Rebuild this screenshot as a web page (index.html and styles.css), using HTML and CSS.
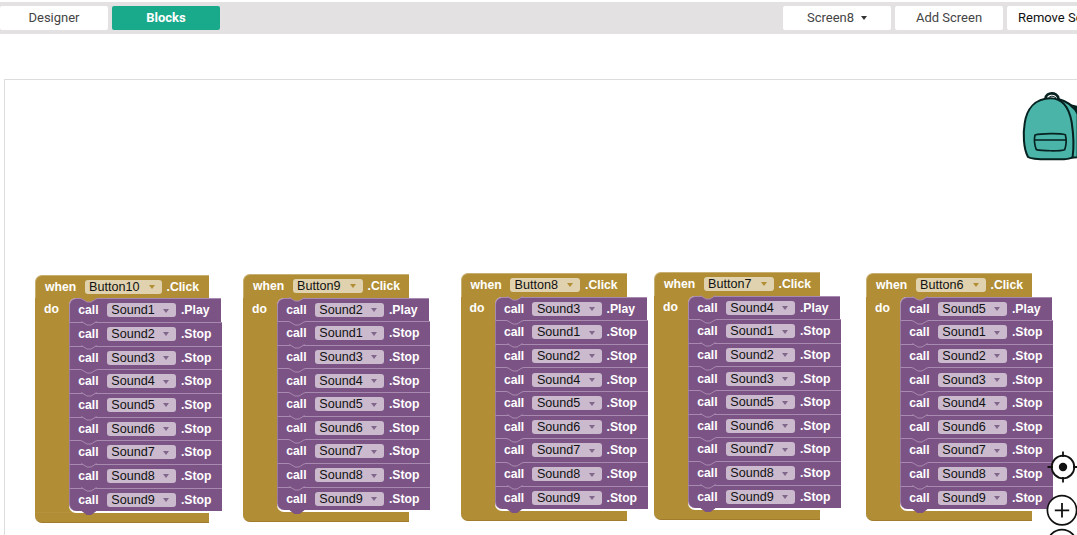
FILE: index.html
```html
<!DOCTYPE html>
<html lang="en">
<head>
<meta charset="utf-8">
<title>Blocks editor</title>
<link rel="stylesheet" href="styles.css">
</head>
<body>
<header class="toolbar">
  <nav class="group"><button class="tab">Designer</button><button class="tab active">Blocks</button></nav>
  <div class="group"><button class="tab menu">Screen8</button><button class="tab">Add Screen</button><button class="tab wide">Remove Screen</button></div>
</header>
<main class="workspace">
  <section class="event button10">
    <h2><b>when</b><i>Button10</i><b>.Click</b></h2>
    <div class="body"><b class="do">do</b>
      <ul>
        <li><b>call</b><i>Sound1</i><b>.Play</b></li>
        <li><b>call</b><i>Sound2</i><b>.Stop</b></li>
        <li><b>call</b><i>Sound3</i><b>.Stop</b></li>
        <li><b>call</b><i>Sound4</i><b>.Stop</b></li>
        <li><b>call</b><i>Sound5</i><b>.Stop</b></li>
        <li><b>call</b><i>Sound6</i><b>.Stop</b></li>
        <li><b>call</b><i>Sound7</i><b>.Stop</b></li>
        <li><b>call</b><i>Sound8</i><b>.Stop</b></li>
        <li><b>call</b><i>Sound9</i><b>.Stop</b></li>
      </ul>
    </div>
    <div class="foot"></div>
  </section>
  <section class="event button9">
    <h2><b>when</b><i>Button9</i><b>.Click</b></h2>
    <div class="body"><b class="do">do</b>
      <ul>
        <li><b>call</b><i>Sound2</i><b>.Play</b></li>
        <li><b>call</b><i>Sound1</i><b>.Stop</b></li>
        <li><b>call</b><i>Sound3</i><b>.Stop</b></li>
        <li><b>call</b><i>Sound4</i><b>.Stop</b></li>
        <li><b>call</b><i>Sound5</i><b>.Stop</b></li>
        <li><b>call</b><i>Sound6</i><b>.Stop</b></li>
        <li><b>call</b><i>Sound7</i><b>.Stop</b></li>
        <li><b>call</b><i>Sound8</i><b>.Stop</b></li>
        <li><b>call</b><i>Sound9</i><b>.Stop</b></li>
      </ul>
    </div>
    <div class="foot"></div>
  </section>
  <section class="event button8">
    <h2><b>when</b><i>Button8</i><b>.Click</b></h2>
    <div class="body"><b class="do">do</b>
      <ul>
        <li><b>call</b><i>Sound3</i><b>.Play</b></li>
        <li><b>call</b><i>Sound1</i><b>.Stop</b></li>
        <li><b>call</b><i>Sound2</i><b>.Stop</b></li>
        <li><b>call</b><i>Sound4</i><b>.Stop</b></li>
        <li><b>call</b><i>Sound5</i><b>.Stop</b></li>
        <li><b>call</b><i>Sound6</i><b>.Stop</b></li>
        <li><b>call</b><i>Sound7</i><b>.Stop</b></li>
        <li><b>call</b><i>Sound8</i><b>.Stop</b></li>
        <li><b>call</b><i>Sound9</i><b>.Stop</b></li>
      </ul>
    </div>
    <div class="foot"></div>
  </section>
  <section class="event button7">
    <h2><b>when</b><i>Button7</i><b>.Click</b></h2>
    <div class="body"><b class="do">do</b>
      <ul>
        <li><b>call</b><i>Sound4</i><b>.Play</b></li>
        <li><b>call</b><i>Sound1</i><b>.Stop</b></li>
        <li><b>call</b><i>Sound2</i><b>.Stop</b></li>
        <li><b>call</b><i>Sound3</i><b>.Stop</b></li>
        <li><b>call</b><i>Sound5</i><b>.Stop</b></li>
        <li><b>call</b><i>Sound6</i><b>.Stop</b></li>
        <li><b>call</b><i>Sound7</i><b>.Stop</b></li>
        <li><b>call</b><i>Sound8</i><b>.Stop</b></li>
        <li><b>call</b><i>Sound9</i><b>.Stop</b></li>
      </ul>
    </div>
    <div class="foot"></div>
  </section>
  <section class="event button6">
    <h2><b>when</b><i>Button6</i><b>.Click</b></h2>
    <div class="body"><b class="do">do</b>
      <ul>
        <li><b>call</b><i>Sound5</i><b>.Play</b></li>
        <li><b>call</b><i>Sound1</i><b>.Stop</b></li>
        <li><b>call</b><i>Sound2</i><b>.Stop</b></li>
        <li><b>call</b><i>Sound3</i><b>.Stop</b></li>
        <li><b>call</b><i>Sound4</i><b>.Stop</b></li>
        <li><b>call</b><i>Sound6</i><b>.Stop</b></li>
        <li><b>call</b><i>Sound7</i><b>.Stop</b></li>
        <li><b>call</b><i>Sound8</i><b>.Stop</b></li>
        <li><b>call</b><i>Sound9</i><b>.Stop</b></li>
      </ul>
    </div>
    <div class="foot"></div>
  </section>
  <svg class="backpack" viewBox="0 0 231 270" fill="#4ab4a9" stroke="#06211f" stroke-width="6" stroke-linejoin="round" stroke-linecap="round">
    <path d="M137 55C138 35 172 35 175 55" fill="none" stroke-width="8"/>
    <path d="M146 53Q155 43 167 53" fill="#fff" stroke-width="3"/>
    <path d="M175 57C205 65 222 78 233 102V232L214 233Z"/>
    <path d="M212 76L234 81V96Z" fill="#06211f"/>
    <path d="M84 231C70 205 69 160 74 130C80 88 104 56 152 55C190 55 207 84 215 126C220 160 222 200 218 229C216 240 175 238 145 238C118 238 92 237 84 231Z"/>
    <path d="M105 165C122 160 181 159 196 164C200 178 198 197 194 209C181 214 126 213 109 209C103 194 102 178 105 165Z" stroke-width="5"/>
    <path d="M104 180H198" stroke-width="5"/>
  </svg>
  <svg class="controls" viewBox="0 0 37 90" fill="#fff" stroke="#111" stroke-width="1.8">
    <circle cx="23" cy="22" r="11.3"/><circle cx="23" cy="22" r="4.2" fill="#111" stroke="none"/>
    <path d="M23 6.5V12M23 32V37.5M7.5 22H13M33 22H38.5"/>
    <circle cx="22" cy="65.3" r="14.6" stroke-width="1.7"/><path d="M14.8 65.3H29.2M22 58V72.6"/>
    <circle cx="22" cy="99.3" r="14.6"/>
  </svg>
</main>
</body>
</html>
```
FILE: styles.css
```css
* { box-sizing: border-box; }
body {
  margin: 0;
  height: 535px;
  overflow: hidden;
  background: #fff;
  display: flex;
  flex-direction: column;
  font-family: "Liberation Sans", Arial, sans-serif;
}
.toolbar {
  margin-top: 2px;
  height: 32px;
  flex: none;
  padding: 4px 0;
  display: flex;
  justify-content: space-between;
  background: #e3e1e1;
}
.group { display: flex; gap: 4px; }
.group:last-child { margin-right: -38px; }
.tab {
  width: 108px;
  height: 24px;
  padding: 0 0 1px;
  border: 0;
  border-radius: 2px;
  background: #fff;
  color: #444;
  font: 13px Roboto, sans-serif;
  white-space: nowrap;
}
.tab.active { background: #19a98b; color: #fff; font-weight: 700; }
.tab.wide { padding-left: 11px; text-align: left; color: #111; }
.menu::after {
  content: "";
  display: inline-block;
  margin: 0 0 2px 7px;
  border: 3px solid transparent;
  border-top: 4px solid #333;
  border-bottom: 0;
}
.workspace {
  position: relative;
  flex: 1;
  margin: 45px 0 0 4px;
  border: 1px solid #ddd;
  border-width: 1px 0 0 1px;
}

/* Blocks sit at free positions on the workspace canvas. */
.event { position: absolute; font-size: 12.2px; color: #fff; }
.button10 { left: 30px; top: 194.8px; --w: 173.5px; --field: 77px; }
.button9 { left: 238px; top: 194px; --w: 166px; --field: 70px; }
.button8 { left: 455.6px; top: 193px; --w: 166px; --field: 70px; }
.button7 { left: 649px; top: 192px; --w: 166px; --field: 70px; }
.button6 { left: 861px; top: 193px; --w: 166px; --field: 70px; }
.event h2 {
  margin: 0;
  width: var(--w);
  height: 23.5px;
  padding: 0 0 1px 9px;
  display: flex;
  align-items: center;
  background: #b18e35;
  border-top: 1px solid #c8b072;
  border-left: 1px solid #c8b072;
  border-radius: 7px 0 0 0;
  font-size: inherit;
}
.event b { white-space: nowrap; }
.event i {
  position: relative;
  height: 14px;
  padding-left: 4.5px;
  border-radius: 3px;
  font: 12.6px/14px "Liberation Sans", Arial, sans-serif;
  color: #111;
}
.event i::after {
  content: "";
  position: absolute;
  right: 7px;
  top: 5.5px;
  border: 3px solid transparent;
  border-top: 4px solid #80668a;
  border-bottom: 0;
}
.event h2 b:first-child { width: 39.5px; }
.event h2 i { width: var(--field); margin-right: 5px; background: #e0d2ae; }
.event h2 i::after { border-top-color: #b18e35; }
.body {
  display: flex;
  background: linear-gradient(#b18e35, #b18e35) left / 42px 100% no-repeat;
}
.do { width: 34px; padding: 4px 0 0 9px; }
.event ul {
  margin: 0;
  padding: 0 0 2px;
  list-style: none;
  background: #fff;
  border-radius: 7px 0 0 7px;
}
.event ul li:first-child { width: 152px; border-radius: 7px 0 0 0; border-left-color: #a78ab0; }
.event li {
  position: relative;
  width: 153px;
  height: 23.67px;
  padding: 0 0 0.6px 8.3px;
  display: flex;
  align-items: center;
  background: #7c5385;
  border-top: 1px solid #a889af;
  border-left: 1px solid #9a7aa2;
}
.event li:last-child { border-radius: 0 0 0 7px; }
.event li b:first-child { width: 28.5px; }
.event li i { width: 69.5px; margin-right: 4.7px; background: #cbbace; }

/* Connector notch on top of each call, tab below the last one. */
.event li::before, .event li:last-child::after {
  content: "";
  position: absolute;
  left: 11px;
  top: -1.5px;
  width: 16px;
  height: 5px;
  background: url("data:image/svg+xml,%3Csvg xmlns='http://www.w3.org/2000/svg' viewBox='0 0 16 5'%3E%3Cpath d='M0 0H16V1H15L10 4H6L1 1H0Z' fill='%237c5385'/%3E%3Cpath d='M0 .9H1L6 4H10L15 .9H16' fill='none' stroke='%23a889af'/%3E%3C/svg%3E");
}
.event li:first-child::before {
  background: url("data:image/svg+xml,%3Csvg xmlns='http://www.w3.org/2000/svg' viewBox='0 0 16 5'%3E%3Cpath d='M0 0H16V1H15L10 4H6L1 1H0Z' fill='%23b18e35'/%3E%3Cpath d='M0 .9H1L6 4H10L15 .9H16' fill='none' stroke='%23a889af'/%3E%3C/svg%3E");
}
.event li:last-child::after { top: auto; bottom: -4px; background: #7c5385; clip-path: polygon(0 0, 100% 0, 94% 20%, 62% 100%, 38% 100%, 6% 20%); }
.foot {
  width: var(--w);
  height: 9.5px;
  background: #b18e35;
  border-bottom: 1px solid #a07c2c;
  border-radius: 0 0 0 7px;
}
.backpack { position: absolute; left: 995px; top: 0; width: 77px; height: 90px; }
.controls { position: absolute; left: 1035px; top: 365px; width: 37px; height: 90px; }
```
